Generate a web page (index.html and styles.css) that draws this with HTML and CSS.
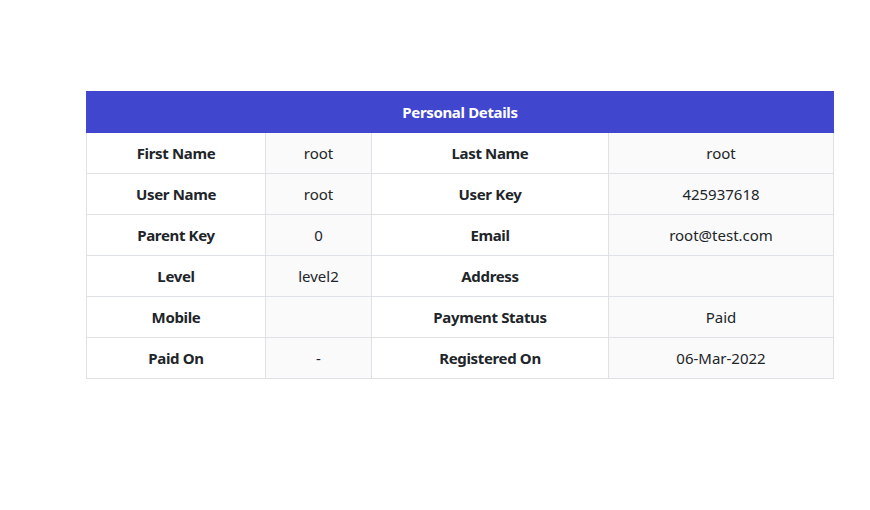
FILE: index.html
```html
<!DOCTYPE html>
<html>
<head>
<meta charset="utf-8">
<link rel="stylesheet" href="styles.css">
</head>
<body>
<div class="wrap">
<table class="details">
  <colgroup>
    <col class="c1"><col class="c2"><col class="c3"><col class="c4">
  </colgroup>
  <thead>
    <tr><th colspan="4" class="head">Personal Details</th></tr>
  </thead>
  <tbody>
    <tr><th>First Name</th><td>root</td><th>Last Name</th><td>root</td></tr>
    <tr><th>User Name</th><td>root</td><th>User Key</th><td>425937618</td></tr>
    <tr><th>Parent Key</th><td>0</td><th>Email</th><td>root@test.com</td></tr>
    <tr><th>Level</th><td>level2</td><th>Address</th><td></td></tr>
    <tr><th>Mobile</th><td></td><th>Payment Status</th><td>Paid</td></tr>
    <tr><th>Paid On</th><td>-</td><th>Registered On</th><td>06-Mar-2022</td></tr>
  </tbody>
</table>
</div>
</body>
</html>
```
FILE: styles.css
```css
html, body { margin: 0; padding: 0; background: #fff; }
body { font-family: "Noto Sans", "Open Sans", sans-serif; color: #212529; }
.wrap { padding: 91px 0 0 86px; }
.details { border-collapse: collapse; width: 747px; table-layout: fixed; font-size: 15px; line-height: 20px; }
.c1 { width: 179px; } .c2 { width: 106px; } .c3 { width: 237px; } .c4 { width: 225px; }
.details th, .details td { border: 1px solid #dee2e6; text-align: center; height: 39px; padding: 0 0 1px; }
.details th { font-weight: 700; letter-spacing: -0.35px; background: #fff; }
.details td { background: #fafafa; font-weight: 400; }
.details .head { background: #4146cf; color: #fff; border-color: #4146cf; height: 40px; padding: 0; font-weight: 700; }
```
